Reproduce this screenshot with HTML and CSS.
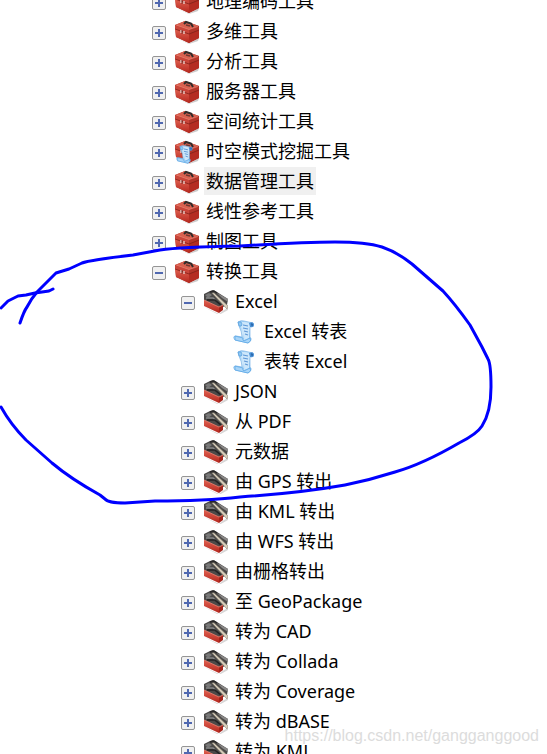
FILE: index.html
```html
<!DOCTYPE html>
<html lang="zh-CN">
<head>
    <meta charset="UTF-8">
    <meta name="viewport" content="width=device-width, initial-scale=1.0">
    <title>工具箱</title>
    <link rel="stylesheet" href="styles.css">
</head>
<body>
    <!-- Iconos del árbol -->
    <svg class="iconos" aria-hidden="true">
        <defs>
            <linearGradient id="rojo" x1="0" y1="0" x2="0" y2="1">
                <stop offset="0" stop-color="#e0604f"/>
                <stop offset="1" stop-color="#b5281f"/>
            </linearGradient>
            <linearGradient id="papel" x1="0" y1="0" x2="1" y2="1">
                <stop offset="0" stop-color="#6fb6ee"/>
                <stop offset="0.5" stop-color="#cfe8fb"/>
                <stop offset="1" stop-color="#5aa5e5"/>
            </linearGradient>
        </defs>
        <symbol id="caja" viewBox="0 0 24 24">
            <path d="M1 18 14 23.500 24 18 23 21 14 24Z" fill="#999" opacity=".5"/>
            <path d="M0 5 10 1 24 6V18L14 23 1 17Z" fill="#a32a21"/>
            <path d="M0 5 10 1 24 6 14 10Z" fill="#d9604f"/>
            <path d="M0 5 14 10V14L0 9Z" fill="#c9453a"/>
            <path d="M0 9 14 14V23L1 17Z" fill="url(#rojo)"/>
            <path d="M14 10 24 6V10L14 14Z" fill="#b3352a"/>
            <path d="M14 14 24 10V18L14 23Z" fill="#b42c22"/>
            <path d="M0 9 14 14 24 10" fill="none" stroke="#84221a" stroke-width=".8"/>
            <path d="M1 5 14 9.500 23 6.500" fill="none" stroke="#e88273" stroke-width=".7"/>
            <path d="M9 4 11 2 16 3.500 18 7" fill="none" stroke="#2f2b2a" stroke-width="2"/>
            <path d="M11 5 15 6" stroke="#6d3a34" stroke-width="1.500"/>
            <path d="M6 10V13M9 11V14" stroke="#ecd5d0" stroke-width="1.300"/>
            <path d="M7 10V14" stroke="#6a2821" stroke-width=".8"/>
        </symbol>
        <symbol id="abierta" viewBox="0 0 24 24">
            <path d="M0 17 15 24 20 20 24 18 24 20 15 25Z" fill="#999" opacity=".4"/>
            <path d="M0 4 6 1 9 0 13 2 24 9 23 15 15 19 0 12Z" fill="#4b4948"/>
            <path d="M1 5 5 3 8 5 4 8Z" fill="#777"/>
            <path d="M2 8 9 8 17 15" fill="none" stroke="#858585" stroke-width="1.500"/>
            <path d="M13 3 24 9V12L18 8Z" fill="#8a8887"/>
            <path d="M3 10 11 10 17 15" fill="none" stroke="#242323" stroke-width="1.700"/>
            <path d="M8 3 10 3 24 16 23 19Z" fill="#dcd2be" stroke="#8c8577" stroke-width=".6"/>
            <path d="M0 10 15 17V23L0 16Z" fill="url(#rojo)"/>
            <path d="M15 17 19 15V20L15 23Z" fill="#a4251d"/>
            <path d="M0 10 15 17 19 15" fill="none" stroke="#ef8070" stroke-width=".8"/>
            <path d="M6 2 10 1 13 3" fill="none" stroke="#292828" stroke-width="1.500"/>
        </symbol>
        <symbol id="guion" viewBox="0 0 24 24">
            <path d="M5 2Q8 0 11 1L20 3 17 7 17 17Q20 20 15 23L2 20Q-1 16 3 16L9 17Q9 12 6 6Z" fill="url(#papel)" stroke="#79b3e6" stroke-width=".7"/>
            <path d="M7 2Q9 1 18 4L16 8 16 18 11 20Q12 13 8 7Z" fill="#cde7fb"/>
            <path d="M5 2Q9 1 9 4 9 7 6 6Z" fill="#8fc8f3" stroke="#579ddd" stroke-width=".7"/>
            <path d="M16 3Q21 1 21 5 21 8 17 7Z" fill="#4a91d6"/>
            <path d="M18 4Q20 3 19 6" fill="none" stroke="#22599b"/>
            <path d="M10 5 15 6M10 8 15 9M11 11 15 12M12 14 15 15" stroke="#5d97d6" stroke-width="1.200"/>
            <path d="M2 16 10 18Q9 22 13 20L17 18Q19 21 15 23L2 20Z" fill="#a9d5f8" stroke="#5ba7e6" stroke-width=".8"/>
        </symbol>
        <symbol id="caja-guion" viewBox="0 0 24 24">
            <use href="#caja" width="24" height="24"/>
            <use href="#guion" x="1" y="5" width="19" height="19"/>
        </symbol>
    </svg>

    <main class="panel">
        <ul class="arbol">
            <li><div class="fila"><button class="boton mas" aria-label="展开"></button><svg class="icono"><use href="#caja"/></svg><span class="texto">地理编码工具</span></div></li>
            <li><div class="fila"><button class="boton mas" aria-label="展开"></button><svg class="icono"><use href="#caja"/></svg><span class="texto">多维工具</span></div></li>
            <li><div class="fila"><button class="boton mas" aria-label="展开"></button><svg class="icono"><use href="#caja"/></svg><span class="texto">分析工具</span></div></li>
            <li><div class="fila"><button class="boton mas" aria-label="展开"></button><svg class="icono"><use href="#caja"/></svg><span class="texto">服务器工具</span></div></li>
            <li><div class="fila"><button class="boton mas" aria-label="展开"></button><svg class="icono"><use href="#caja"/></svg><span class="texto">空间统计工具</span></div></li>
            <li><div class="fila"><button class="boton mas" aria-label="展开"></button><svg class="icono"><use href="#caja-guion"/></svg><span class="texto">时空模式挖掘工具</span></div></li>
            <li><div class="fila"><button class="boton mas" aria-label="展开"></button><svg class="icono"><use href="#caja"/></svg><span class="texto elegido">数据管理工具</span></div></li>
            <li><div class="fila"><button class="boton mas" aria-label="展开"></button><svg class="icono"><use href="#caja"/></svg><span class="texto">线性参考工具</span></div></li>
            <li><div class="fila"><button class="boton mas" aria-label="展开"></button><svg class="icono"><use href="#caja"/></svg><span class="texto">制图工具</span></div></li>
            <li>
                <div class="fila"><button class="boton" aria-label="折叠"></button><svg class="icono"><use href="#caja"/></svg><span class="texto">转换工具</span></div>
                <ul class="rama">
                    <li>
                        <div class="fila"><button class="boton" aria-label="折叠"></button><svg class="icono"><use href="#abierta"/></svg><span class="texto">Excel</span></div>
                        <ul class="rama hojas">
                            <li><div class="fila"><svg class="icono"><use href="#guion"/></svg><span class="texto">Excel 转表</span></div></li>
                            <li><div class="fila"><svg class="icono"><use href="#guion"/></svg><span class="texto">表转 Excel</span></div></li>
                        </ul>
                    </li>
                    <li><div class="fila"><button class="boton mas" aria-label="展开"></button><svg class="icono"><use href="#abierta"/></svg><span class="texto">JSON</span></div></li>
                    <li><div class="fila"><button class="boton mas" aria-label="展开"></button><svg class="icono"><use href="#abierta"/></svg><span class="texto">从 PDF</span></div></li>
                    <li><div class="fila"><button class="boton mas" aria-label="展开"></button><svg class="icono"><use href="#abierta"/></svg><span class="texto">元数据</span></div></li>
                    <li><div class="fila"><button class="boton mas" aria-label="展开"></button><svg class="icono"><use href="#abierta"/></svg><span class="texto">由 GPS 转出</span></div></li>
                    <li><div class="fila"><button class="boton mas" aria-label="展开"></button><svg class="icono"><use href="#abierta"/></svg><span class="texto">由 KML 转出</span></div></li>
                    <li><div class="fila"><button class="boton mas" aria-label="展开"></button><svg class="icono"><use href="#abierta"/></svg><span class="texto">由 WFS 转出</span></div></li>
                    <li><div class="fila"><button class="boton mas" aria-label="展开"></button><svg class="icono"><use href="#abierta"/></svg><span class="texto">由栅格转出</span></div></li>
                    <li><div class="fila"><button class="boton mas" aria-label="展开"></button><svg class="icono"><use href="#abierta"/></svg><span class="texto">至 GeoPackage</span></div></li>
                    <li><div class="fila"><button class="boton mas" aria-label="展开"></button><svg class="icono"><use href="#abierta"/></svg><span class="texto">转为 CAD</span></div></li>
                    <li><div class="fila"><button class="boton mas" aria-label="展开"></button><svg class="icono"><use href="#abierta"/></svg><span class="texto">转为 Collada</span></div></li>
                    <li><div class="fila"><button class="boton mas" aria-label="展开"></button><svg class="icono"><use href="#abierta"/></svg><span class="texto">转为 Coverage</span></div></li>
                    <li><div class="fila"><button class="boton mas" aria-label="展开"></button><svg class="icono"><use href="#abierta"/></svg><span class="texto">转为 dBASE</span></div></li>
                    <li><div class="fila"><button class="boton mas" aria-label="展开"></button><svg class="icono"><use href="#abierta"/></svg><span class="texto">转为 KML</span></div></li>
                </ul>
            </li>
        </ul>

        <!-- Trazo a mano alrededor de las herramientas de conversión -->
        <svg class="trazo" width="500" height="520" viewBox="0 0 500 520" aria-hidden="true">
            <path d="M20 323Q24 311 27 307 31 299 37 292L56 273 69 269 82 263Q90 260 133 255L160 250Q180 247 240 246 305 242 335 242 366 242 382 247 397 252 412 264L443 291Q455 304 470 325L482 347 488 359Q491 364 491 387 491 412 482 426 477 434 459 443 423 464 395 472 370 480 345 485 300 493 240 497 205 501 155 501L125 503Q108 503 105 499L100 495Q71 479 52 463L26 440Q11 425 1 407"/>
            <path d="M1 308 8 301 18 296 26 295 35 293 49 291 53 289"/>
        </svg>
        <a class="marca" href="https://blog.csdn.net/gangganggood">https://blog.csdn.net/gangganggood</a>
    </main>
</body>
</html>
```
FILE: styles.css
```css
body{
    margin:0;
    background-color:#fff;
    color:#000;
    font-family:"Noto Sans", "Noto Sans CJK SC", sans-serif;
    font-size:18px;
}
/* Sin display:none, si no se pierden los degradados */
.iconos{
    position:absolute;
    width:0;
    height:0;
}
.panel{
    position:relative;
    height:100vh;
    overflow:hidden;
}
/* La lista está desplazada, la primera fila se ve cortada */
.arbol{
    list-style:none;
    margin:-13px 0 0;
    padding:0 0 0 152px;
}
.rama{
    list-style:none;
    margin:0;
    padding:0 0 0 29px;
}
.hojas{
    padding-left:52px;
}
.fila{
    display:flex;
    align-items:center;
    height:30px;
    white-space:nowrap;
}
.boton{
    box-sizing:border-box;
    width:14px;
    height:14px;
    margin:2px 9px 0 0;
    padding:0;
    border:1px solid #959595;
    border-radius:2px;
    background:linear-gradient(#5068b0, #5068b0) center / 8px 2px no-repeat #f0f0f0;
}
.mas{
    background:
        linear-gradient(#5068b0, #5068b0) center / 8px 2px no-repeat,
        linear-gradient(#5068b0, #5068b0) center / 2px 8px no-repeat,
        #f0f0f0;
}
.icono{
    width:24px;
    height:24px;
    margin-right:5px;
}
.texto{
    padding:0 2px;
    line-height:28px;
    margin-bottom:2px;
}
.elegido{
    background-color:#f0f0f0;
}
.trazo{
    position:absolute;
    top:0;
    left:0;
    fill:none;
    stroke:#0000ff;
    stroke-width:3px;
    stroke-linecap:round;
    stroke-linejoin:round;
}
.marca{
    position:absolute;
    right:8px;
    bottom:8px;
    color:#dcdcdc;
    font-family:"Liberation Sans", Arial, sans-serif;
    font-size:16px;
    line-height:20px;
    text-decoration:none;
}
```
